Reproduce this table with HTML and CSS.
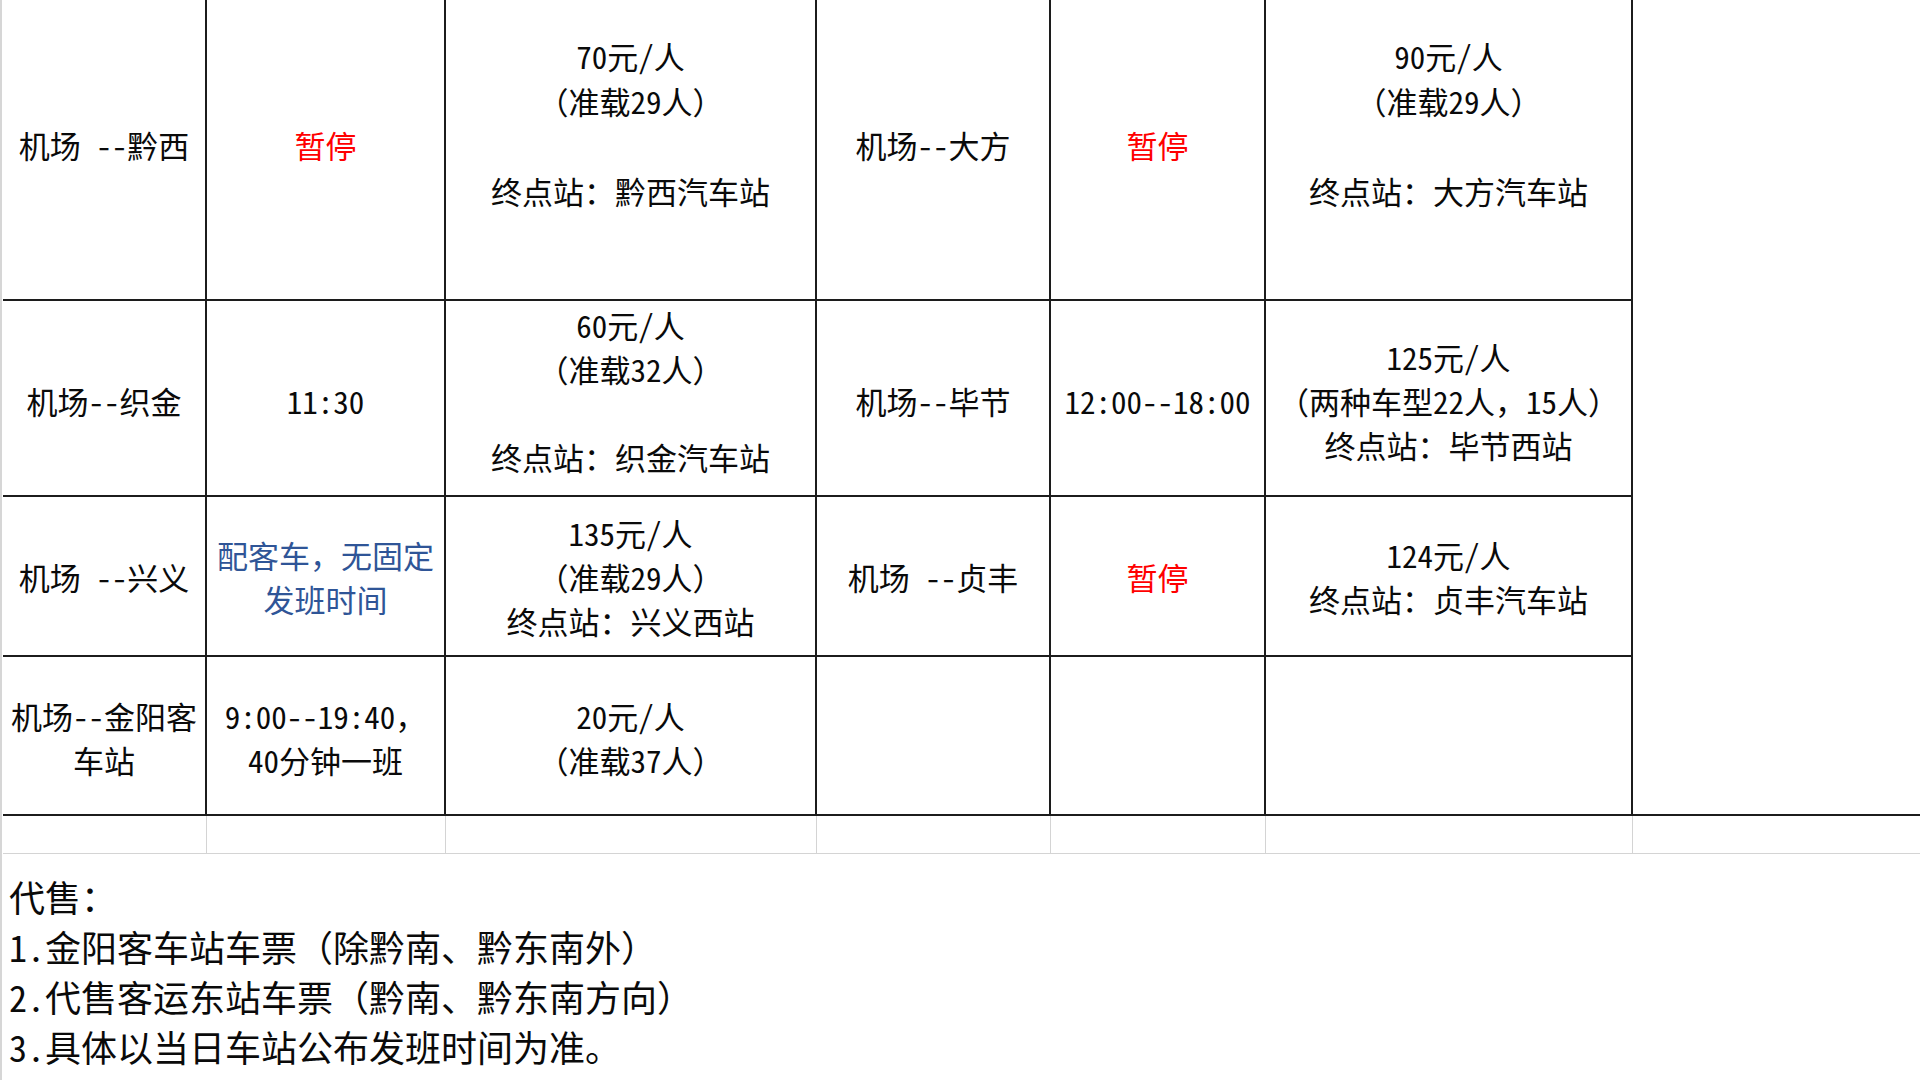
FILE: index.html
```html
<!DOCTYPE html>
<html lang="zh-CN">
<head>
<meta charset="utf-8">
<title>机场大巴时刻表</title>
<link rel="stylesheet" href="styles.css">
</head>
<body>
<div class="sheet">
  <div class="grid">
    <!-- row 1 -->
    <div class="cell r1">机场 --黔西</div>
    <div class="cell r1 red">暂停</div>
    <div class="cell r1 lift">70元/人<br>（准载29人）<br><br>终点站：黔西汽车站<br>&nbsp;</div>
    <div class="cell r1">机场--大方</div>
    <div class="cell r1 red">暂停</div>
    <div class="cell r1 lift">90元/人<br>（准载29人）<br><br>终点站：大方汽车站<br>&nbsp;</div>
    <div class="cell r1 blank"></div>
    <!-- row 2 -->
    <div class="cell r2">机场--织金</div>
    <div class="cell r2">11:30</div>
    <div class="cell r2 up">60元/人<br>（准载32人）<br><br>终点站：织金汽车站</div>
    <div class="cell r2">机场--毕节</div>
    <div class="cell r2">12:00--18:00</div>
    <div class="cell r2">125元/人<br>（两种车型22人，15人）<br>终点站：毕节西站</div>
    <div class="cell r2 blank"></div>
    <!-- row 3 -->
    <div class="cell r3">机场 --兴义</div>
    <div class="cell r3 blue">配客车，无固定<br>发班时间</div>
    <div class="cell r3">135元/人<br>（准载29人）<br>终点站：兴义西站</div>
    <div class="cell r3">机场 --贞丰</div>
    <div class="cell r3 red">暂停</div>
    <div class="cell r3">124元/人<br>终点站：贞丰汽车站</div>
    <div class="cell r3 blank"></div>
    <!-- row 4 -->
    <div class="cell r4">机场--金阳客<br>车站</div>
    <div class="cell r4">9:00--19:40，<br>40分钟一班</div>
    <div class="cell r4">20元/人<br>（准载37人）</div>
    <div class="cell r4"></div>
    <div class="cell r4"></div>
    <div class="cell r4"></div>
    <div class="cell r4 blank-bottom"></div>
    <!-- empty gridline row -->
    <div class="gcell"></div>
    <div class="gcell"></div>
    <div class="gcell"></div>
    <div class="gcell"></div>
    <div class="gcell"></div>
    <div class="gcell"></div>
    <div class="gcell last"></div>
  </div>
  <div class="notes">
    <p>代售：</p>
    <p>1.金阳客车站车票（除黔南、黔东南外）</p>
    <p>2.代售客运东站车票（黔南、黔东南方向）</p>
    <p>3.具体以当日车站公布发班时间为准。</p>
  </div>
</div>
</body>
</html>
```

FILE: styles.css
```css
* {
  box-sizing: border-box;
}

html, body {
  margin: 0;
  padding: 0;
  background: #ffffff;
}

body {
  width: 1920px;
  height: 1080px;
  overflow: hidden;
  font-family: "Noto Sans Mono CJK SC", "Noto Sans CJK SC", "DejaVu Sans", sans-serif;
  color: #0a0a0a;
}

.sheet {
  border-left: 2px solid #d6d6d6;
  padding-left: 1px;
  height: 1080px;
}

.grid {
  display: grid;
  grid-template-columns: 204px 239px 371px 234px 215px 367px 1fr;
  grid-template-rows: 301px 196px 160px 159px 38px;
}

.cell {
  display: flex;
  align-items: center;
  justify-content: center;
  text-align: center;
  font-size: 31px;
  line-height: 44px;
  border-right: 2px solid #1c1c1c;
  border-bottom: 2px solid #1c1c1c;
  padding: 0 2px;
  white-space: nowrap;
}

.r1 {
  padding-bottom: 9px;
}

.r1.lift {
  line-height: 45px;
}

.r2 {
  padding-top: 5px;
}

.r2.up {
  padding-top: 0;
  padding-bottom: 14px;
}

.r3 {
  padding-top: 1px;
}

.r4 {
  padding-top: 4px;
}

.blank {
  border-right: none;
  border-bottom: none;
}

.blank-bottom {
  border-right: none;
}

.red {
  color: #ff0000;
}

.blue {
  color: #2f5597;
}

.gcell {
  border-right: 1px solid #d4d4d4;
  border-bottom: 1px solid #d4d4d4;
}

.gcell.last {
  border-right: none;
}

.notes {
  padding: 17px 0 0 6px;
  font-size: 36px;
  line-height: 50px;
}

.notes p {
  margin: 0;
  white-space: nowrap;
}
```
